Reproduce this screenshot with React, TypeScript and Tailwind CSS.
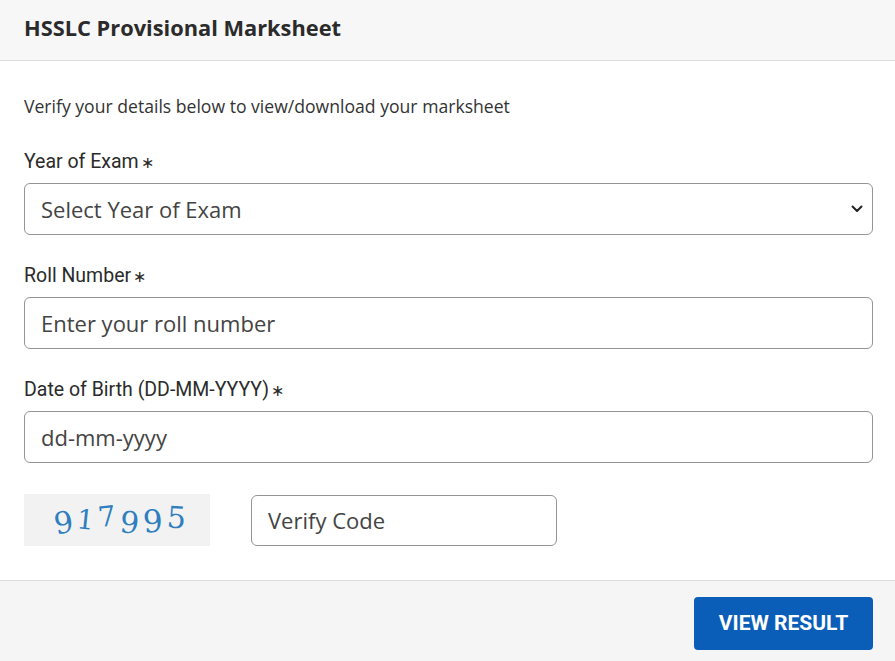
import React from "react";

const sans = "font-['Open_Sans',sans-serif]";
const label = "font-['Roboto',sans-serif] text-[19.5px] leading-6 text-[#2b2b2b]";

const Field = ({ title, children }: { title: string; children: React.ReactNode }) => (
  <div className="flex flex-col">
    <label className={`${label} mb-[8px]`}>
      {title}
      <span className="ml-[2px] text-[16px]">∗</span>
    </label>
    {children}
  </div>
);

const inputCls = `h-[52px] w-full rounded-[6px] border border-[#949494] bg-white px-4 text-[22px] text-[#444] placeholder:text-[#444] outline-none ${sans}`;

// distorted captcha digits
const captcha = [
  { c: "9", r: "-rotate-[10deg]", y: "translate-y-[3px]", s: "text-[30px]" },
  { c: "1", r: "rotate-[6deg]", y: "-translate-y-[1px]", s: "text-[27px]" },
  { c: "7", r: "-rotate-[6deg]", y: "-translate-y-[3px]", s: "text-[28px]" },
  { c: "9", r: "rotate-[6deg]", y: "translate-y-[3px]", s: "text-[30px]" },
  { c: "9", r: "-rotate-[4deg]", y: "translate-y-[1px]", s: "text-[31px]" },
  { c: "5", r: "rotate-[4deg]", y: "-translate-y-[2px]", s: "text-[30px]" },
];

export default function App() {
  return (
    <div className={`w-[895px] h-[661px] bg-white flex flex-col ${sans}`}>
      <div className="h-[61px] shrink-0 bg-[#f7f7f7] border-b border-[#ddd] flex items-center px-6">
        <h1 className="text-[21.8px] font-bold text-[#2b2b2b] -mt-[3px]">HSSLC Provisional Marksheet</h1>
      </div>

      <div className="flex-1 pl-6 pr-[22px] pt-[33px]">
        <p className="text-[17.6px] leading-[24px] text-[#333]">Verify your details below to view/download your marksheet</p>

        <div className="mt-[32px] flex flex-col gap-[29px]">
          <Field title="Year of Exam">
            <div className="relative">
              <select className={`${inputCls} appearance-none`} defaultValue="">
                <option value="">Select Year of Exam</option>
              </select>
              <svg className="absolute right-[10px] top-[21px] w-[12px] h-[10px]" viewBox="0 0 12 10" fill="none">
                <path d="M1.5 2.5 L6 7 L10.5 2.5" stroke="#222" strokeWidth="2" strokeLinecap="round" strokeLinejoin="round" />
              </svg>
            </div>
          </Field>
          <Field title="Roll Number">
            <input className={inputCls} placeholder="Enter your roll number" />
          </Field>
          <Field title="Date of Birth (DD-MM-YYYY)">
            <input className={inputCls} placeholder="dd-mm-yyyy" />
          </Field>
        </div>

        <div className="mt-[31px] flex items-center gap-[41px]">
          <div className="w-[186px] h-[52px] bg-[#f2f2f2] flex items-center justify-center gap-[4px] pl-[6px]">
            {captcha.map((d, i) => (
              <span
                key={i}
                className={`inline-block font-['DejaVu_Serif',serif] leading-none text-[#2f7fbf] ${d.s} ${d.r} ${d.y}`}
              >
                {d.c}
              </span>
            ))}
          </div>
          <input className={`${inputCls} !w-[306px] !h-[51px]`} placeholder="Verify Code" />
        </div>
      </div>

      <div className="h-[81px] shrink-0 bg-[#f5f5f5] border-t border-[#ddd] flex justify-end items-start pt-[16px] pr-[22px]">
        <button className="w-[179px] h-[53px] rounded-[4px] bg-[#0b5eb8] text-white font-['Roboto',sans-serif] font-bold text-[21px]">
          VIEW RESULT
        </button>
      </div>
    </div>
  );
}
